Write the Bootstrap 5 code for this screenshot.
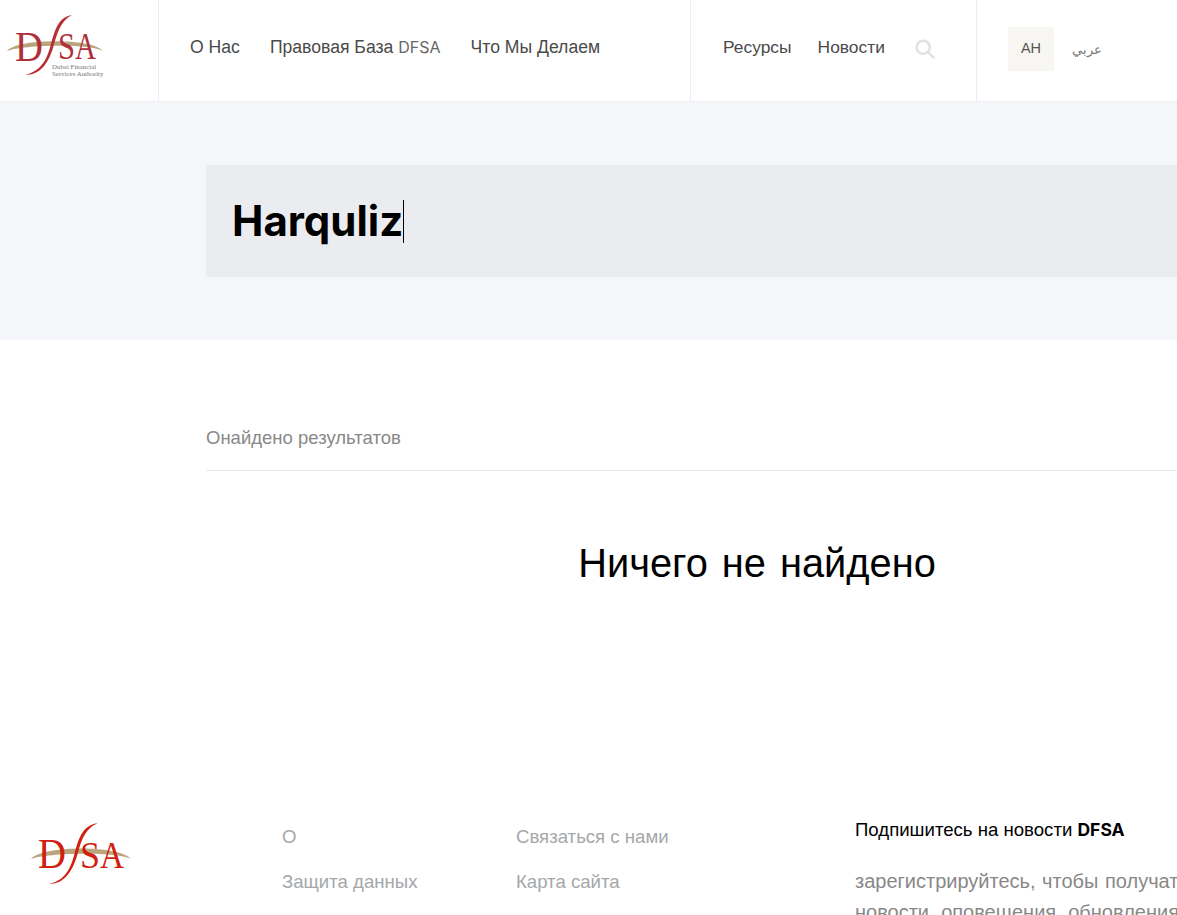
<!DOCTYPE html>
<html lang="ru">
<head>
<meta charset="utf-8">
<title>DFSA</title>
<link href="https://cdn.jsdelivr.net/npm/bootstrap@5.3.0/dist/css/bootstrap.min.css" rel="stylesheet">
<style>
html,body{overflow:hidden;height:915px}
body{font-family:"Liberation Sans",Arial,sans-serif;color:#444;background:#fff}
.site-head{height:102px;border-bottom:1px solid #eceef2}
.logo-cell{width:159px;border-right:1px solid #eceef2;padding-left:7px;padding-top:14px;flex:none}
.logo-cell svg{display:block}
.main-nav{width:532px;flex:none;border-right:1px solid #eceef2;padding-left:31px;gap:30px;padding-bottom:6px}
.main-nav .head-link{font-size:17.6px}
.side-nav{width:286px;flex:none;border-right:1px solid #eceef2;padding-left:32px;gap:26px;padding-bottom:6px}
.head-link{color:#4a4a4a;font-size:17.4px;text-decoration:none}
.main-nav .head-link span{color:#666;font-family:"Inter",sans-serif;font-size:16px}
.glass{margin-left:4px;margin-top:2px}
.lang-cell{padding-left:31px;padding-bottom:3px;gap:18px}
.lang-on{width:46px;height:44px;background:#f7f6f2;color:#555;font-size:14.5px;text-decoration:none}
.lang-ar{color:#777;font-size:13px;text-decoration:none;margin-top:2px}
.hero-band{height:238px;background:#f5f6fa;padding:63px 0 0 206px}
.search-field{width:1102px;height:112px;background:#ebecf0;padding-left:26px}
.search-text{font-family:"Inter",sans-serif;font-size:42px;font-weight:700;color:#000;border-right:1px solid #000;height:43px;line-height:41px}
.results-wrap{padding-left:206px;height:482px}
.results-count{height:131px;padding-top:86px;width:970px;border-bottom:1px solid #e9e9e9;color:#888;font-size:18.5px;line-height:24px}
.none-found{width:1102px;font-size:39.8px;font-weight:400;color:#000;text-align:center;margin:69px 0 0;line-height:46px;word-spacing:3px}
.foot-wrap{padding-left:30px}
.foot-logo{width:252px;flex:none}
.foot-logo svg{display:block}
.foot-a{width:234px;flex:none}
.foot-b{width:339px;flex:none}
.foot-link{display:block;color:#a5a7aa;font-size:18.6px;line-height:24px;text-decoration:none;margin-bottom:21px}
.foot-links-col{padding-top:3px}
.foot-sub{width:400px;flex:none;margin-top:-4px}
.sub-title{font-size:18.6px;color:#000;line-height:24px;margin-bottom:24px;font-weight:400}
.sub-title b{font-weight:700;font-family:"Inter",sans-serif;font-size:17.5px}
.sub-text{font-size:20px;color:#888;line-height:31px;margin:0;white-space:nowrap;word-spacing:1px}
</style>
</head>
<body>
<header class="site-head d-flex">
  <a class="logo-cell d-block" href="#">
    <svg width="98" height="66" viewBox="0 0 98 66" role="img" aria-label="DFSA">
      <path d="M0 37 C10 24 86 24 96 37 C84 29 14 31 0 37Z" fill="#b8a57c"/>
      <text x="8" y="47" font-family="Liberation Serif" font-size="42" textLength="28" lengthAdjust="spacingAndGlyphs" fill="#b0303a">D</text>
      <text x="51" y="45" font-family="Liberation Serif" font-size="38" textLength="17" lengthAdjust="spacingAndGlyphs" fill="#b0303a">S</text>
      <text x="68" y="45" font-family="Liberation Serif" font-size="38" textLength="21" lengthAdjust="spacingAndGlyphs" fill="#b0303a">A</text>
      <path d="M65 1 C53 3 49 12 45 26 C41 42 37 56 18 61 C33 61 41 50 46 34 C50 20 53 7 65 1Z" fill="#b92d35"/>
      <text x="45" y="54.5" font-family="Liberation Serif" font-size="6.9" fill="#777">Dubai Financial</text>
      <text x="45" y="62" font-family="Liberation Serif" font-size="6.9" fill="#777">Services Authority</text>
    </svg>
  </a>
  <nav class="main-nav d-flex align-items-center">
    <a class="head-link" href="#">О Нас</a>
    <a class="head-link" href="#">Правовая База <span>DFSA</span></a>
    <a class="head-link" href="#">Что Мы Делаем</a>
  </nav>
  <nav class="side-nav d-flex align-items-center">
    <a class="head-link" href="#">Ресурсы</a>
    <a class="head-link" href="#">Новости</a>
    <svg class="glass" width="20" height="20" viewBox="0 0 20 20" fill="none" stroke="#e0e0e0" stroke-width="2.4"><circle cx="8.2" cy="8.2" r="6.6"/><path d="M13 13l5.6 5.6" stroke-linecap="round"/></svg>
  </nav>
  <div class="lang-cell d-flex align-items-center">
    <a class="lang-on d-flex align-items-center justify-content-center" href="#">АН</a>
    <a class="lang-ar" href="#" lang="ar">عربي</a>
  </div>
</header>
<section class="hero-band">
  <div class="search-field d-flex align-items-center"><div class="search-text">Harquliz</div></div>
</section>
<main class="results-wrap">
  <div class="results-count">Онайдено результатов</div>
  <h2 class="none-found">Ничего не найдено</h2>
</main>
<footer class="foot-wrap d-flex">
  <div class="foot-logo">
    <svg width="102" height="64" viewBox="0 0 102 64" role="img" aria-label="DFSA">
      <path d="M1 37 C12 23 90 23 101 37 C88 29 14 31 1 37Z" fill="#b8a57c"/>
      <text x="8" y="46" font-family="Liberation Serif" font-size="42" textLength="28" lengthAdjust="spacingAndGlyphs" fill="#d0200f">D</text>
      <text x="50" y="46" font-family="Liberation Serif" font-size="38" textLength="20" lengthAdjust="spacingAndGlyphs" fill="#d0200f">S</text>
      <text x="70" y="46" font-family="Liberation Serif" font-size="38" textLength="24" lengthAdjust="spacingAndGlyphs" fill="#d0200f">A</text>
      <path d="M68 1 C55 3 50 12 46 26 C42 42 38 58 19 62 C34 62 42 50 47 34 C51 20 54 7 68 1Z" fill="#d0200f"/>
    </svg>
  </div>
  <div class="foot-a foot-links-col"><a class="foot-link" href="#">О</a><a class="foot-link" href="#">Защита данных</a></div>
  <div class="foot-b foot-links-col"><a class="foot-link" href="#">Связаться с нами</a><a class="foot-link" href="#">Карта сайта</a></div>
  <div class="foot-sub">
    <div class="sub-title">Подпишитесь на новости <b>DFSA</b></div>
    <p class="sub-text">зарегистрируйтесь, чтобы получать<br>новости, оповещения, обновления</p>
  </div>
</footer>
<script src="https://cdn.jsdelivr.net/npm/bootstrap@5.3.0/dist/js/bootstrap.bundle.min.js"></script>
</body>
</html>
